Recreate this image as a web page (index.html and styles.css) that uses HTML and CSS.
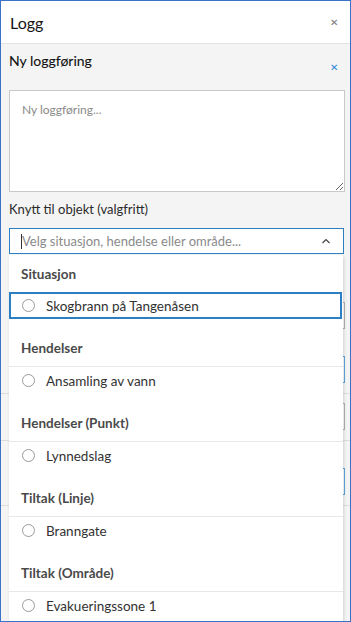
FILE: index.html
```html
<!DOCTYPE html>
<html lang="no">
<head>
    <meta charset="UTF-8">
    <title>Logg</title>
    <link rel="stylesheet" href="styles.css">
</head>
<body>

    <div class="frame">
        <div class="header">
            <span class="header-title">Logg</span>
            <span class="close grey">&#x2715;</span>
        </div>

        <div class="panel">
            <div class="panel-head">
                <span class="panel-title">Ny loggføring</span>
                <span class="close blue">&#x2715;</span>
            </div>

            <textarea class="entry" placeholder="Ny loggføring..."></textarea>

            <label class="field-label">Knytt til objekt (valgfritt)</label>

            <div class="select-wrap">
                <div class="select">
                    <span class="caret"></span>
                    <span class="select-text">Velg situasjon, hendelse eller område...</span>
                    <svg class="chevron" width="10" height="6" viewBox="0 0 10 6">
                        <path d="M1.5 5 L5 1.5 L8.5 5" fill="none" stroke="#444" stroke-width="1.2"/>
                    </svg>
                </div>

                <div class="dropdown">
                    <div class="group-title">Situasjon</div>
                    <div class="option active"><span class="radio"></span>Skogbrann på Tangenåsen</div>

                    <div class="group-title">Hendelser</div>
                    <div class="option"><span class="radio"></span>Ansamling av vann</div>

                    <div class="group-title">Hendelser (Punkt)</div>
                    <div class="option"><span class="radio"></span>Lynnedslag</div>

                    <div class="group-title">Tiltak (Linje)</div>
                    <div class="option"><span class="radio"></span>Branngate</div>

                    <div class="group-title">Tiltak (Område)</div>
                    <div class="option"><span class="radio"></span>Evakueringssone 1</div>
                </div>
            </div>

            <!-- content hidden behind the open dropdown -->
            <div class="behind">
                <div class="box grey-box first"></div>
                <div class="box blue-box"></div>
                <div class="rule"></div>
                <div class="box grey-box"></div>
                <div class="rule"></div>
                <div class="box blue-box"></div>
                <div class="rule"></div>
            </div>
        </div>
    </div>

</body>
</html>
```

FILE: styles.css
```css
body {
    margin: 0;
    font-family: Lato, "Open Sans", sans-serif;
    color: #151515;
}
.frame {
    width: 351px;
    height: 622px;
    box-sizing: border-box;
    border: 1px solid #3a72c8;
    background: #f4f4f4;
    overflow: hidden;
}
.header {
    height: 42px;
    background: #fff;
    border-bottom: 1px solid #e3e3e3;
    display: flex;
    align-items: center;
    justify-content: space-between;
    padding: 0 11px 0 9px;
}
.header-title {
    font-size: 16px;
}
.close {
    font-size: 10px;
    line-height: 10px;
    width: 10px;
    text-align: center;
}
.close.grey {
    color: #777;
}
.close.blue {
    color: #2d8ad8;
    margin-top: 18px;
}
.panel {
    padding: 0 5px 0 8px;
}
.panel-head {
    display: flex;
    justify-content: space-between;
    align-items: flex-start;
    padding-right: 6px;
}
.panel-title {
    margin-top: 8px;
    font-size: 14px;
    line-height: 18px;
    color: #111;
    -webkit-text-stroke: 0.1px #111;
}
.entry {
    display: block;
    width: 100%;
    height: 102px;
    margin-top: 18px;
    box-sizing: border-box;
    border: 1px solid #c8c8c8;
    background: #fff;
    padding: 11px 12px;
    font-family: inherit;
    font-size: 12px;
    resize: vertical;
}
.entry::placeholder {
    color: #8a8a8a;
}
.field-label {
    display: block;
    margin-top: 8px;
    font-size: 13px;
    line-height: 18px;
    color: #2b2b2b;
}
.select-wrap {
    position: relative;
    margin-top: 10px;
    margin-right: 1px;
}
.select {
    height: 26px;
    box-sizing: border-box;
    border: 1px solid #2c7fc2;
    background: #fff;
    display: flex;
    align-items: center;
    padding: 0 12px 0 11px;
    font-size: 13px;
    color: #8a8a8a;
}
.caret {
    width: 1px;
    height: 15px;
    background: #333;
}
.select-text {
    flex: 1;
}
.chevron {
    display: block;
}
.dropdown {
    position: absolute;
    top: calc(100% + 1px);
    left: 0;
    right: 1px;
    background: #fff;
    box-shadow: 1px 2px 3px rgba(0,0,0,0.15);
    z-index: 2;
}
.group-title {
    height: 37px;
    line-height: 38px;
    padding-left: 12px;
    font-size: 13.5px;
    font-weight: 700;
    color: #4a4a4a;
    border-bottom: 1px solid #e8e8e8;
}
.option {
    height: 27px;
    margin-bottom: 10px;
    display: flex;
    align-items: center;
    padding-left: 13px;
    font-size: 13.5px;
    color: #323232;
    box-sizing: border-box;
}
.option.active {
    border: 2px solid #2c7fc2;
    margin-top: -1px;
    margin-right: 1px;
    padding-left: 11px;
}
.radio {
    width: 11px;
    height: 11px;
    border: 1px solid #9a9a9a;
    border-radius: 50%;
    margin-right: 11px;
    background: #fff;
}
.box {
    height: 27px;
    box-sizing: border-box;
    background: #fff;
}
.grey-box {
    border: 1px solid #b0b0b0;
    margin-top: 9px;
}
.grey-box.first {
    margin-top: 48px;
}
.blue-box {
    border: 1px solid #5ea9de;
    margin-top: 27px;
}
.rule {
    height: 1px;
    background: #dcdcdc;
    margin: 10px -6px 0 -8px;
}
```
